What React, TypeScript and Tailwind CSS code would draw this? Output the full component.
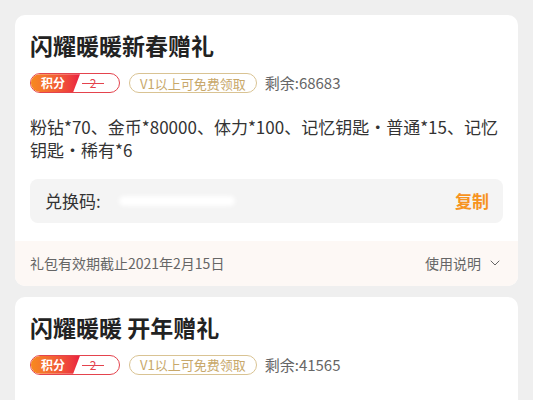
import React from 'react';
import { ChevronDown } from 'lucide-react';

interface Gift {
  title: string;
  remain: number;
  content?: string;
  expire?: string;
}

const gifts: Gift[] = [
  {
    title: '闪耀暖暖新春赠礼',
    remain: 68683,
    content: '粉钻*70、金币*80000、体力*100、记忆钥匙・普通*15、记忆钥匙・稀有*6',
    expire: '礼包有效期截止2021年2月15日',
  },
  {
    title: '闪耀暖暖 开年赠礼',
    remain: 41565,
    content: '粉钻*50、金币*50000、体力*60、记忆钥匙・普通*10',
    expire: '礼包有效期截止2021年2月28日',
  },
];

const font = "font-['Noto_Sans_CJK_SC','Noto_Sans',sans-serif]";

const PointsBadge = () => (
  <div className="relative flex h-[20px] w-[90px] items-center overflow-hidden rounded-full border border-[#e4434d] bg-white">
    <div className="absolute inset-y-0 left-0 w-[49px] bg-gradient-to-r from-[#f78a1d] to-[#ea1c3f] [clip-path:polygon(0_0,100%_0,86%_100%,0_100%)]" />
    <span className="relative z-10 w-[44px] pl-[10px] text-[12px] font-bold leading-none text-white">积分</span>
    <span className="relative z-10 flex-1 pr-[8px] text-center text-[12px] leading-none text-[#e4434d]">
      <span className="relative inline-block px-[8px]">
        2
        <span className="absolute left-0 right-0 top-1/2 h-px bg-[#e4434d]" />
      </span>
    </span>
  </div>
);

const GiftCard = ({ gift }: { gift: Gift }) => (
  <div className="overflow-hidden rounded-[10px] bg-white">
    <div className="px-[15px] pt-[15px] pb-[18px]">
      <h2 className="text-[23px] font-bold leading-[30px] text-[#222]">{gift.title}</h2>
      <div className="mt-[12px] flex items-center gap-[9px]">
        <PointsBadge />
        <span className="flex h-[20px] items-center rounded-full border border-[#d9c393] px-[10px] text-[13px] leading-none text-[#c8a86a]">
          V1以上可免费领取
        </span>
        <span className="-ml-[1px] text-[15px] text-[#666]">剩余:{gift.remain}</span>
      </div>
      <p className="mt-[20px] text-[17px] leading-[23px] text-[#333]">{gift.content}</p>
      <div className="mt-[18px] flex h-[44px] items-center justify-between rounded-[8px] bg-[#f4f4f4] pl-[15px] pr-[14px]">
        <div className="flex items-center">
          <span className="text-[17px] text-[#333]">兑换码:</span>
          <span className="ml-[18px] h-[10px] w-[116px] rounded-full bg-white blur-[2px]" />
        </div>
        <span className="text-[17px] font-bold text-[#f7931e]">复制</span>
      </div>
    </div>
    <div className="flex h-[45px] items-center justify-between bg-[#fdf8f5] px-[15px]">
      <span className="text-[14px] text-[#666]">{gift.expire}</span>
      <span className="flex items-center gap-[6px] text-[14px] text-[#666]">
        使用说明
        <ChevronDown className="h-[16px] w-[16px]" strokeWidth={1.5} />
      </span>
    </div>
  </div>
);

export default function App() {
  return (
    <div className={`${font} min-h-[400px] w-full bg-[#efefef] px-[15px] pt-[15px]`}>
      <div className="flex flex-col gap-[11px]">
        {gifts.map((g) => (
          <GiftCard key={g.title} gift={g} />
        ))}
      </div>
    </div>
  );
}
